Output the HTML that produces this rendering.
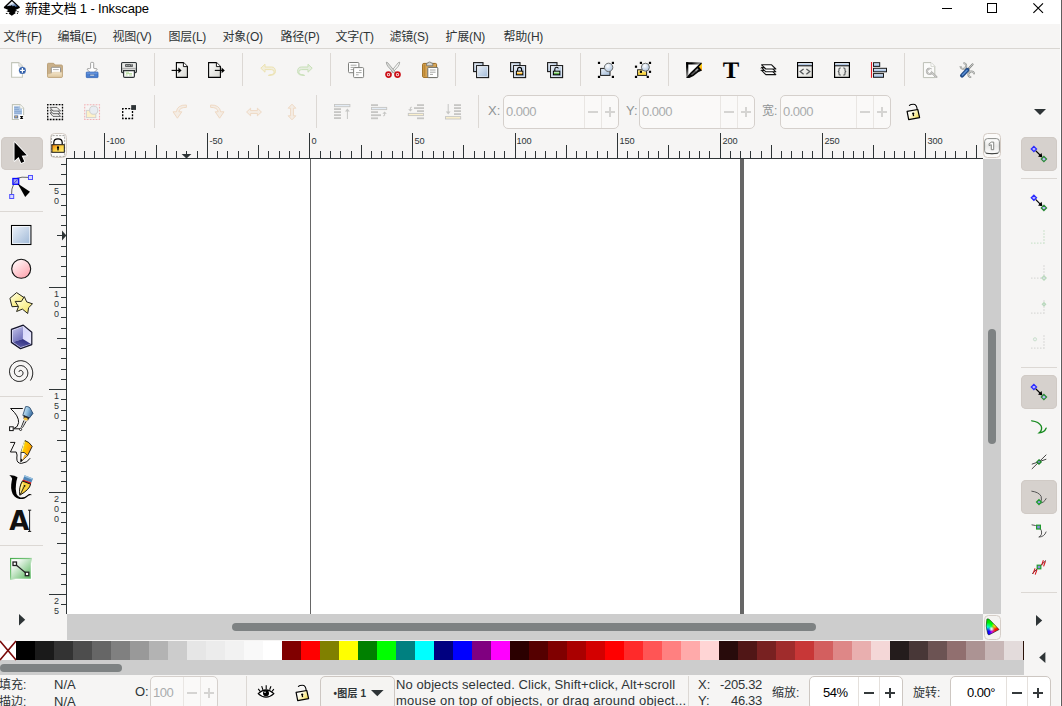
<!DOCTYPE html>
<html><head><meta charset="utf-8"><title>Inkscape</title>
<style>
html,body{margin:0;padding:0}
body{width:1062px;height:706px;overflow:hidden;position:relative;background:#f6f5f4;
font-family:"Liberation Sans","Noto Sans CJK SC",sans-serif;font-size:13px;color:#2e3436}
.a{position:absolute}
.t{position:absolute;white-space:nowrap;line-height:16px}
.sep{position:absolute;width:1px;background:#dcd8d4}
.hsep{position:absolute;height:1px;background:#dcd8d4}
.spin{position:absolute;box-sizing:border-box;border:1px solid #cdc7c2;border-radius:5px;background:#fff}
.spin.dis{background:#faf9f8;border-color:#d5d0cc}
.spin i{position:absolute;top:0;bottom:0;width:1px;background:#e4e0dc}
.spin.dis i{background:#e9e6e3}
.pm{position:absolute;background:#34393b}
.dis .pm{background:#d5d4d2}
.selbtn{position:absolute;background:#d6d1cd;border-radius:5px;box-shadow:inset 0 0 0 1px #d0cac5}
svg{position:absolute;overflow:visible}
</style></head><body>

<div class="a" style="left:0;top:0;width:1062px;height:24px;background:#fff"></div>
<div class="t" style="left:25px;top:0px;font-size:13px;line-height:17px;color:#000;letter-spacing:-0.15px">新建文档 1 - Inkscape</div>
<div class="a" style="left:942px;top:8px;width:10px;height:1px;background:#000"></div>
<div class="a" style="left:987px;top:3px;width:8px;height:8px;border:1px solid #000"></div>
<svg style="left:1033px;top:3px" width="11" height="11" viewBox="0 0 11 11"><path d="M0.4 0.3L10 9.9M10 0.3L0.4 9.9" stroke="#000" stroke-width="1.15" fill="none"/></svg>
<div class="t" style="left:3.5px;top:29px;font-size:12px;letter-spacing:-0.2px">文件(F)</div>
<div class="t" style="left:57.5px;top:29px;font-size:12px;letter-spacing:-0.2px">编辑(E)</div>
<div class="t" style="left:112.5px;top:29px;font-size:12px;letter-spacing:-0.2px">视图(V)</div>
<div class="t" style="left:168.5px;top:29px;font-size:12px;letter-spacing:-0.2px">图层(L)</div>
<div class="t" style="left:222.5px;top:29px;font-size:12px;letter-spacing:-0.2px">对象(O)</div>
<div class="t" style="left:280.5px;top:29px;font-size:12px;letter-spacing:-0.2px">路径(P)</div>
<div class="t" style="left:335.5px;top:29px;font-size:12px;letter-spacing:-0.2px">文字(T)</div>
<div class="t" style="left:389.5px;top:29px;font-size:12px;letter-spacing:-0.2px">滤镜(S)</div>
<div class="t" style="left:445.5px;top:29px;font-size:12px;letter-spacing:-0.2px">扩展(N)</div>
<div class="t" style="left:503.5px;top:29px;font-size:12px;letter-spacing:-0.2px">帮助(H)</div>
<div class="hsep" style="left:0;top:48px;width:1062px;background:#d9d6d2"></div>
<div class="sep" style="left:154px;top:53px;height:33px"></div>
<div class="sep" style="left:242px;top:53px;height:33px"></div>
<div class="sep" style="left:330px;top:53px;height:33px"></div>
<div class="sep" style="left:455px;top:53px;height:33px"></div>
<div class="sep" style="left:580px;top:53px;height:33px"></div>
<div class="sep" style="left:668px;top:53px;height:33px"></div>
<div class="sep" style="left:904px;top:53px;height:33px"></div>
<div class="sep" style="left:154px;top:95px;height:33px"></div>
<div class="sep" style="left:316px;top:95px;height:33px"></div>
<div class="sep" style="left:478px;top:95px;height:33px"></div>
<svg style="left:0;top:0" width="0" height="0"><defs>
<linearGradient id="gBlue" x1="0" y1="0" x2="1" y2="1"><stop offset="0" stop-color="#eef3fa"/><stop offset="1" stop-color="#9db7d6"/></linearGradient>
<linearGradient id="gPink" x1="0.2" y1="0.1" x2="0.8" y2="0.9"><stop offset="0" stop-color="#fff4f5"/><stop offset="1" stop-color="#ffa9b3"/></linearGradient>
<linearGradient id="gPage" x1="0" y1="0" x2="1" y2="1"><stop offset="0" stop-color="#ffffff"/><stop offset="1" stop-color="#d6d6d0"/></linearGradient>
<linearGradient id="gYel" x1="0.1" y1="0" x2="0.9" y2="1"><stop offset="0" stop-color="#fffef0"/><stop offset="0.5" stop-color="#fbf3a0"/><stop offset="1" stop-color="#f1e063"/></linearGradient>
<linearGradient id="gLock" x1="0" y1="0.2" x2="1" y2="0.8"><stop offset="0" stop-color="#ffffff"/><stop offset="0.3" stop-color="#fffdf0"/><stop offset="0.65" stop-color="#faee9c"/><stop offset="1" stop-color="#f0d640"/></linearGradient>
<linearGradient id="gLockO" x1="0" y1="0" x2="1" y2="1"><stop offset="0" stop-color="#f07c00"/><stop offset="0.5" stop-color="#fdd247"/><stop offset="1" stop-color="#fff176"/></linearGradient>
<linearGradient id="gGreenS" x1="0" y1="0" x2="1" y2="1"><stop offset="0" stop-color="#46ab4c"/><stop offset="0.45" stop-color="#7cc680"/><stop offset="0.62" stop-color="#ffffff"/><stop offset="1" stop-color="#ffffff"/></linearGradient>
<linearGradient id="gGreenF" x1="0" y1="0" x2="1" y2="1"><stop offset="0" stop-color="#ffffff"/><stop offset="0.18" stop-color="#fbfdfb"/><stop offset="1" stop-color="#56b45c"/></linearGradient>
<linearGradient id="gBoxL" x1="0.2" y1="0" x2="0.7" y2="1"><stop offset="0" stop-color="#c6c6ea"/><stop offset="1" stop-color="#6c6cba"/></linearGradient>
<linearGradient id="gBoxR" x1="0" y1="0" x2="1" y2="1"><stop offset="0" stop-color="#d4d4fa"/><stop offset="1" stop-color="#ececff"/></linearGradient>
<linearGradient id="gBoxB" x1="0.8" y1="0" x2="0.2" y2="1"><stop offset="0" stop-color="#26267c"/><stop offset="1" stop-color="#6a6ab0"/></linearGradient>
<linearGradient id="gCap" x1="0" y1="0.3" x2="1" y2="0.7"><stop offset="0" stop-color="#d8eef8"/><stop offset="0.45" stop-color="#8dbbdc"/><stop offset="1" stop-color="#2c5c92"/></linearGradient>
<linearGradient id="gPencil" x1="0" y1="0" x2="1" y2="0.4"><stop offset="0" stop-color="#fff200"/><stop offset="1" stop-color="#ff9a00"/></linearGradient>
<linearGradient id="gSnow" x1="0.25" y1="0" x2="0.95" y2="0.9"><stop offset="0" stop-color="#ffffff"/><stop offset="0.35" stop-color="#e4ebf5"/><stop offset="0.7" stop-color="#6f8fbe"/><stop offset="1" stop-color="#1f3f78"/></linearGradient>
<linearGradient id="gKey" x1="0" y1="0" x2="0" y2="1"><stop offset="0" stop-color="#ffffff"/><stop offset="0.5" stop-color="#e9e9e8"/><stop offset="1" stop-color="#fdfdfd"/></linearGradient>
<linearGradient id="gFold" x1="0" y1="0" x2="0" y2="1"><stop offset="0" stop-color="#f3e4c8"/><stop offset="1" stop-color="#dfc9a2"/></linearGradient>
<linearGradient id="gWin" x1="0" y1="0" x2="1" y2="1"><stop offset="0" stop-color="#ffffff"/><stop offset="1" stop-color="#dcdcd6"/></linearGradient>
<linearGradient id="gTitle" x1="0" y1="0" x2="0" y2="1"><stop offset="0" stop-color="#e8f0fa"/><stop offset="1" stop-color="#8fb0da"/></linearGradient>
<radialGradient id="gBall" cx="0.4" cy="0.35" r="0.7"><stop offset="0" stop-color="#ffffff"/><stop offset="1" stop-color="#a9c0dc"/></radialGradient>
</defs></svg>
<svg style="left:0px;top:0px" width="24" height="17" viewBox="0 0 24 17" ><path d="M11.8 -0.6L19.9 7.1Q20 8 18.6 8.6L15.4 9.9L17.2 10.8L14.6 12L15.8 13L11.8 15.7L8.6 13.6L9.8 12.6L6.4 11.3L8.4 9.9L5 8.6Q3.6 8 3.9 7.1Z" fill="#000"/><path d="M11.9 1.3L18.2 7Q16.6 5.9 15.3 7Q14.4 4.8 12.8 6.4Q11.6 4.4 10.3 6.1Q9 5.2 7.6 6.3Q7 6.2 7.2 5.8Z" fill="url(#gSnow)"/><ellipse cx="17.9" cy="11.7" rx="1.1" ry="0.5" fill="#000"/><ellipse cx="6.7" cy="13.4" rx="1" ry="0.5" fill="#000"/><ellipse cx="17.4" cy="13.4" rx="0.6" ry="0.5" fill="#000"/></svg>
<svg style="left:11px;top:62px" width="16" height="16" viewBox="0 0 16 16" ><path d="M0.6 0.6H7.8L11.4 4.2V15.3H0.6Z" fill="#fff" stroke="#c3c6ba" stroke-width="1.1" stroke-linejoin="round"/><path d="M7.8 0.8V4.2H11.2" fill="#eee" stroke="#c9cbc2" stroke-width="0.8"/><circle cx="11.4" cy="8.4" r="3.6" fill="#2a59a6"/><circle cx="11.4" cy="8.4" r="3.6" fill="none" stroke="#fff" stroke-width="0.6" opacity="0.5"/><path d="M9.1 8.4H13.7M11.4 6.1V10.7" stroke="#fff" stroke-width="1.3"/></svg>
<svg style="left:47px;top:62px" width="16" height="16" viewBox="0 0 16 16" ><path d="M0.5 2.2Q0.5 1.3 1.4 1.3H6.2Q7 1.3 7.4 2.1L7.9 3H14.4Q15.4 3 15.4 4V14.4Q15.4 15.4 14.4 15.4H1.5Q0.5 15.4 0.5 14.4Z" fill="#c9b08a" stroke="#b89c72" stroke-width="0.9"/><rect x="4.3" y="5.3" width="9.2" height="6.5" rx="0.8" fill="#fff" stroke="#8a8a88" stroke-width="0.9"/><path d="M6 7.6H11.8" stroke="#a8a8a6" stroke-width="0.9"/><path d="M0.9 12.2Q3 12.2 4.4 11.2Q5.6 10.2 7 10.2H15V14.3Q15 15 14.3 15H1.6Q0.9 15 0.9 14.3Z" fill="url(#gFold)" stroke="#d6bf96" stroke-width="0.5"/></svg>
<svg style="left:84px;top:62px" width="16" height="16" viewBox="0 0 16 16" ><path d="M6.6 1.2Q6.6 0.4 7.4 0.4H8.9Q9.7 0.4 9.7 1.2V6.2Q10.6 6.8 12.6 6.6Q13.6 6.8 12.9 7.9L8.7 11.6Q8.1 12 7.6 11.6L3.4 7.9Q2.7 6.8 3.7 6.6Q5.7 6.8 6.6 6.2Z" fill="#fff" stroke="#9a9a98" stroke-width="0.9"/><rect x="2.3" y="10.1" width="11.7" height="5.5" rx="0.5" fill="#4a7fd0" stroke="#2f62b4" stroke-width="0.8"/><path d="M2.8 10.6H13.5V11.5H2.8Z" fill="#7aa5e6"/><rect x="5.9" y="12.4" width="4.5" height="1.5" fill="#fff" stroke="#355c9c" stroke-width="0.5"/></svg>
<svg style="left:121px;top:62px" width="16" height="16" viewBox="0 0 16 16" ><path d="M0.6 1.6Q0.6 0.6 1.6 0.6H14.4Q15.4 0.6 15.4 1.6V9.6Q15.4 10.6 14.4 10.6H1.6Q0.6 10.6 0.6 9.6Z" fill="#d9dad8" stroke="#2e3436" stroke-width="1.2"/><rect x="1.4" y="1.2" width="13.2" height="4.6" fill="#e8e9e7"/><rect x="4.2" y="2.2" width="7.6" height="2.6" fill="#3b3f40"/><rect x="5.2" y="3" width="1.4" height="0.9" fill="#cfd2d0"/><rect x="7.4" y="3" width="1.4" height="0.9" fill="#cfd2d0"/><rect x="9.6" y="2.6" width="1.6" height="0.8" fill="#eee"/><path d="M1.2 6.4H14.8" stroke="#9a9c9a" stroke-width="0.8"/><path d="M2.6 8.6H13.4V14.2Q13.4 15.4 12.2 15.4H3.8Q2.6 15.4 2.6 14.2Z" fill="#fff" stroke="#2e3436" stroke-width="1.2"/><path d="M4.6 10.2H8M5 11.6H11M4.6 13H6.6M8 13H11" stroke="#a5d38a" stroke-width="0.8"/></svg>
<svg style="left:171px;top:62px" width="18" height="16" viewBox="0 0 18 16" ><path d="M5.4 0.6H12.399999999999999L16.4 4.6V15.4H5.4Z" fill="url(#gPage)" stroke="#000" stroke-width="1.1" stroke-linejoin="miter"/><path d="M12.399999999999999 0.6V4.6H16.4" fill="#fff" stroke="#000" stroke-width="0.9"/><path d="M0.6 8.4H8" stroke="#000" stroke-width="1.1"/><path d="M7.4 5.6L10.6 8.4L7.4 11.2Z" fill="#000"/></svg>
<svg style="left:208px;top:62px" width="18" height="16" viewBox="0 0 18 16" ><path d="M0.6 0.6H8.4L12.4 4.6V15.4H0.6Z" fill="url(#gPage)" stroke="#000" stroke-width="1.1" stroke-linejoin="miter"/><path d="M8.4 0.6V4.6H12.4" fill="#fff" stroke="#000" stroke-width="0.9"/><path d="M6.8 8.4H14" stroke="#000" stroke-width="1.1"/><path d="M13.6 5.6L16.8 8.4L13.6 11.2Z" fill="#000"/></svg>
<svg style="left:259.5px;top:62px" width="16" height="16" viewBox="0 0 16 16" ><g  opacity="0.75"><path d="M5 2.2L0.8 6.2L5 10.2V7.6H11.4Q14.2 7.6 14.2 10Q14.2 12.6 10 12.8L8.4 13.4Q15.4 13.6 15.4 9.6Q15.4 5 11.6 5H5Z" fill="#e9dc9a" fill-opacity="0.35" stroke="#e9dc9a" stroke-width="1" stroke-linejoin="round"/></g></svg>
<svg style="left:297px;top:62px" width="16" height="16" viewBox="0 0 16 16" ><g transform="translate(16,0) scale(-1,1)" opacity="0.75"><path d="M5 2.2L0.8 6.2L5 10.2V7.6H11.4Q14.2 7.6 14.2 10Q14.2 12.6 10 12.8L8.4 13.4Q15.4 13.6 15.4 9.6Q15.4 5 11.6 5H5Z" fill="#b9d9a4" fill-opacity="0.35" stroke="#b9d9a4" stroke-width="1" stroke-linejoin="round"/></g></svg>
<svg style="left:348px;top:62px" width="16" height="16" viewBox="0 0 16 16" ><rect x="0.5" y="0.5" width="10.4" height="10.2" rx="1" fill="#fff" stroke="#7e7f7c" stroke-width="1"/><path d="M2.6 3.2H8.6M2.6 5.4H8.6M2.6 7.6H5.4" stroke="#9c9d9a" stroke-width="0.9"/><rect x="5.6" y="5.6" width="10" height="10" rx="1" fill="#fff" stroke="#7e7f7c" stroke-width="1"/><path d="M11 8.4H13.6M8 10.6H13.6M8 12.8H10.6" stroke="#9c9d9a" stroke-width="0.9"/></svg>
<svg style="left:385px;top:62px" width="16" height="16" viewBox="0 0 16 16" ><path d="M14.7 0.2L13.4 0.6L5.4 10.4L6.8 11.4L13 4.6Q14.6 2.4 14.7 0.2Z" fill="#f4f5f3" stroke="#8b8d8a" stroke-width="0.7"/><path d="M1.3 0.2L2.6 0.6L10.6 10.4L9.2 11.4L3 4.6Q1.4 2.4 1.3 0.2Z" fill="#dcdedb" stroke="#8b8d8a" stroke-width="0.7"/><circle cx="3.5" cy="12.6" r="2.5" fill="#fff" stroke="#cc0f17" stroke-width="1.7"/><circle cx="3.5" cy="12.6" r="0.85" fill="#cc0f17"/><circle cx="12.5" cy="12.6" r="2.5" fill="#fff" stroke="#cc0f17" stroke-width="1.7"/><circle cx="12.5" cy="12.6" r="0.85" fill="#cc0f17"/></svg>
<svg style="left:422px;top:62px" width="16" height="16" viewBox="0 0 16 16" ><rect x="0.6" y="1.4" width="14" height="14" rx="1.2" fill="#d8a75a" stroke="#9a6a1e" stroke-width="1"/><path d="M1.6 2.4H3.4V14.4H1.6Z" fill="#bd8732"/><path d="M4.6 1.8Q4.6 1 5.6 1H6.2Q6.2 0 7.6 0Q9 0 9 1H9.8Q10.8 1 10.8 1.8V3.8H4.6Z" fill="#d5d6d3" stroke="#6c6e6b" stroke-width="0.8"/><rect x="5.8" y="5.4" width="10" height="10.2" rx="0.8" fill="#fff" stroke="#6c6e6b" stroke-width="1"/><path d="M8 8H13.6M8 10.2H13.6M8 12.4H11" stroke="#9c9d9a" stroke-width="0.9"/></svg>
<svg style="left:473px;top:62px" width="16" height="16" viewBox="0 0 16 16" ><rect x="0.6" y="0.6" width="9.4" height="9" fill="url(#gBlue)" stroke="#1a1a1a" stroke-width="1.1"/><rect x="3.6" y="3.6" width="12" height="12" fill="url(#gBlue)" stroke="#1a1a1a" stroke-width="1.1"/><rect x="4.6" y="4.6" width="10" height="10" fill="none" stroke="#fff" stroke-width="0.7" opacity="0.7"/></svg>
<svg style="left:510px;top:62px" width="16" height="16" viewBox="0 0 16 16" ><rect x="0.6" y="0.6" width="9.4" height="9" fill="url(#gBlue)" stroke="#1a1a1a" stroke-width="1.1"/><rect x="3.6" y="3.6" width="12" height="12" fill="url(#gBlue)" stroke="#1a1a1a" stroke-width="1.1"/><rect x="4.6" y="4.6" width="10" height="10" fill="none" stroke="#fff" stroke-width="0.7" opacity="0.7"/><path d="M7.6 9.4V7.4Q7.6 5.4 9.6 5.4Q11.6 5.4 11.6 7.4V9.4" fill="none" stroke="#000" stroke-width="1.1"/><rect x="6.4" y="9.2" width="6.4" height="3.6" fill="#fbb92e" stroke="#000" stroke-width="1"/><path d="M6.9 9.8H12.3V10.8H6.9Z" fill="#fff" opacity="0.75"/></svg>
<svg style="left:547px;top:62px" width="16" height="16" viewBox="0 0 16 16" ><rect x="0.6" y="0.6" width="9.4" height="9" fill="url(#gBlue)" stroke="#1a1a1a" stroke-width="1.1"/><rect x="3.6" y="3.6" width="12" height="12" fill="url(#gBlue)" stroke="#1a1a1a" stroke-width="1.1"/><rect x="4.6" y="4.6" width="10" height="10" fill="none" stroke="#fff" stroke-width="0.7" opacity="0.7"/><path d="M7.8 9.4V7.2Q7.8 5.2 9.6 5.2Q11 5.2 11.4 6.4" fill="none" stroke="#000" stroke-width="1.1"/><rect x="6.4" y="9.2" width="6.4" height="3.6" fill="#5fb84a" stroke="#000" stroke-width="1"/><path d="M6.9 9.8H12.3V10.8H6.9Z" fill="#fff" opacity="0.75"/></svg>
<svg style="left:598px;top:62px" width="16" height="16" viewBox="0 0 16 16" ><rect x="-0.1" y="-0.2" width="2.2" height="2.2" fill="#000"/><rect x="13.8" y="-0.2" width="2.2" height="2.2" fill="#000"/><rect x="-0.1" y="13.8" width="2.2" height="2.2" fill="#000"/><rect x="13.8" y="13.8" width="2.2" height="2.2" fill="#000"/><rect x="2.6" y="6.4" width="9.4" height="7" fill="url(#gBlue)" stroke="#1a1a1a" stroke-width="1"/><circle cx="10.6" cy="5.4" r="4.2" fill="url(#gBall)" stroke="#6a6c6a" stroke-width="1"/></svg>
<svg style="left:635px;top:62px" width="16" height="16" viewBox="0 0 16 16" ><rect x="2.6" y="7.8" width="9" height="5.6" fill="#fbd748" stroke="#1a1a1a" stroke-width="1"/><rect x="3.4" y="8.6" width="7.4" height="1.6" fill="#fff2a8"/><circle cx="10.4" cy="5.2" r="4" fill="url(#gBall)" stroke="#6a6c6a" stroke-width="1"/><rect x="4.8" y="-0.2" width="2.2" height="2.2" fill="#000"/><rect x="13.9" y="-0.2" width="2.2" height="2.2" fill="#000"/><rect x="4.8" y="8.7" width="2.2" height="2.2" fill="#000"/><rect x="13.9" y="8.7" width="2.2" height="2.2" fill="#000"/><rect x="-0.1" y="3.6" width="2.2" height="2.2" fill="#000"/><rect x="-0.1" y="13.8" width="2.2" height="2.2" fill="#000"/><rect x="11.7" y="13.8" width="2.2" height="2.2" fill="#000"/></svg>
<svg style="left:686px;top:62px" width="16" height="16" viewBox="0 0 16 16" ><defs><linearGradient id="gFR" x1="0" y1="0" x2="1" y2="0"><stop offset="0" stop-color="#000"/><stop offset="0.35" stop-color="#000"/><stop offset="1" stop-color="#000" stop-opacity="0.25"/></linearGradient><linearGradient id="gFD" x1="0" y1="0" x2="0" y2="1"><stop offset="0" stop-color="#000"/><stop offset="0.3" stop-color="#000"/><stop offset="1" stop-color="#000" stop-opacity="0.3"/></linearGradient><linearGradient id="gOr" x1="0" y1="0" x2="0" y2="1"><stop offset="0" stop-color="#ffe626"/><stop offset="1" stop-color="#ff9a00"/></linearGradient></defs><path d="M1.6 1.6H14L1.6 14.6Z" fill="#fff"/><path d="M0.1 0.3H16V1.6L14.4 2.6H0.1Z" fill="url(#gFR)"/><path d="M0.1 0.3H2.3V13.6L0.1 15.8Z" fill="url(#gFD)"/><path d="M0.1 15.9Q1.8 13.4 4.6 10.4L10.6 4.8L14.4 0.9L16 1.2V8.4L12.2 10.2Q8 14.2 3.4 15.9Z" fill="#070707"/><path d="M4.6 12.6L9.6 8.2L10.8 9.2L6.2 13Z" fill="#5a5a5a"/><path d="M9 8.6L11.4 6.2L12.6 7.4L10.2 9.6Z" fill="#9a9a9a"/><path d="M12.9 4.7L16 1.5V8.4Z" fill="url(#gOr)"/></svg>
<svg style="left:723px;top:62px" width="16" height="16" viewBox="0 0 16 16" ><text transform="translate(8.1,15.7) scale(1.04,1)" x="0" y="0" text-anchor="middle" font-family="Liberation Serif,serif" font-weight="bold" font-size="23.8" text-rendering="geometricPrecision" fill="#000">T</text></svg>
<svg style="left:760px;top:62px" width="16" height="16" viewBox="0 0 16 16" ><path d="M1.6 8.4H11.6L15.8 12.600000000000001H5.8Z" fill="#fff" stroke="#111" stroke-width="1.1" stroke-linejoin="round"/><path d="M1.6 5.6H11.6L15.8 9.8H5.8Z" fill="#fff" stroke="#111" stroke-width="1.1" stroke-linejoin="round"/><path d="M1.6 2.8H11.6L15.8 7.0H5.8Z" fill="#fff" stroke="#111" stroke-width="1.1" stroke-linejoin="round"/><path d="M0.6 6.2L1.8 5M0.6 9L1.8 7.8" stroke="#1a1a1a" stroke-width="0.8"/></svg>
<svg style="left:797px;top:62px" width="16" height="16" viewBox="0 0 16 16" ><rect x="0.6" y="0.6" width="14.8" height="14.8" fill="url(#gWin)" stroke="#000" stroke-width="1.2"/><rect x="1.4" y="1.4" width="13.2" height="1.9" fill="url(#gTitle)"/><path d="M0.6 3.8H15.4" stroke="#000" stroke-width="1"/><path d="M6.6 7L3.2 9.6L6.6 12.2M9.4 7L12.8 9.6L9.4 12.2" fill="none" stroke="#55585a" stroke-width="1.3"/></svg>
<svg style="left:834px;top:62px" width="16" height="16" viewBox="0 0 16 16" ><rect x="0.6" y="0.6" width="14.8" height="14.8" fill="url(#gWin)" stroke="#000" stroke-width="1.2"/><rect x="1.4" y="1.4" width="13.2" height="1.9" fill="url(#gTitle)"/><path d="M0.6 3.8H15.4" stroke="#000" stroke-width="1"/><path d="M6.8 6H6Q5 6 5 7V8.6Q5 9.5 3.8 9.5Q5 9.5 5 10.4V12Q5 13 6 13H6.8" fill="none" stroke="#55585a" stroke-width="1.1"/><path d="M9.2 6H10Q11 6 11 7V8.6Q11 9.5 12.2 9.5Q11 9.5 11 10.4V12Q11 13 10 13H9.2" fill="none" stroke="#55585a" stroke-width="1.1"/></svg>
<svg style="left:871px;top:62px" width="16" height="16" viewBox="0 0 16 16" ><path d="M0.5 0V15.8" stroke="#e01b24" stroke-width="1.1"/><rect x="2.5" y="0.7" width="6.2" height="3.7" fill="url(#gTitle)" stroke="#1a1a1a" stroke-width="1"/><rect x="2.5" y="6.3" width="13" height="3.5" fill="url(#gTitle)" stroke="#1a1a1a" stroke-width="1"/><rect x="2.5" y="11.6" width="10" height="3.7" fill="url(#gTitle)" stroke="#1a1a1a" stroke-width="1"/></svg>
<svg style="left:922px;top:62px" width="16" height="16" viewBox="0 0 16 16" ><path d="M1.4 0.6H9L12.8 4.4V15.6H1.4Z" fill="#fbfbfa" stroke="#bcbfb6" stroke-width="1"/><path d="M9 0.8V4.4H12.6" fill="#fff" stroke="#c8cac2" stroke-width="0.7"/><path d="M8.9 7.2A2.6 2.6 0 1 0 9.8 10.6L14.4 15" fill="none" stroke="#a3a3a0" stroke-width="2.1" stroke-linecap="round"/><path d="M8.9 7.2A2.6 2.6 0 1 0 9.8 10.6L14.4 15" fill="none" stroke="#f4f4f2" stroke-width="0.7" stroke-linecap="round"/><path d="M7.6 8.6L9.6 7" stroke="#fbfbfa" stroke-width="1.3"/></svg>
<svg style="left:959px;top:62px" width="16" height="16" viewBox="0 0 16 16" ><path d="M5.4 5.2L11.4 11.2" stroke="#8a8c89" stroke-width="2.6" stroke-linecap="butt"/><path d="M5 4.8L11.8 11.6" stroke="#e9eae8" stroke-width="1.1" stroke-linecap="round"/><path d="M4.4 1.1A2.9 2.9 0 1 1 1.5 4" fill="none" stroke="#8a8c89" stroke-width="1.8"/><path d="M4.4 1.1A2.9 2.9 0 1 1 1.5 4" fill="none" stroke="#eeefed" stroke-width="0.6"/><path d="M12.2 15.1A2.9 2.9 0 1 1 15.1 12.2" fill="none" stroke="#8a8c89" stroke-width="1.8"/><path d="M12.2 15.1A2.9 2.9 0 1 1 15.1 12.2" fill="none" stroke="#eeefed" stroke-width="0.6"/><path d="M13.6 2.4L8.4 8" stroke="#7c7e7b" stroke-width="2" stroke-linecap="round"/><path d="M13.6 2.4L8.4 8" stroke="#dfe0de" stroke-width="0.8" stroke-linecap="round"/><path d="M8.4 7.8L3 13.6" stroke="#204a87" stroke-width="4" stroke-linecap="round"/><path d="M8 8.2L3.4 13" stroke="#5a8fd6" stroke-width="1.5" stroke-linecap="round"/></svg>
<svg style="left:11px;top:104px" width="16" height="16" viewBox="0 0 16 16" ><path d="M1.4 0.6H9L12.6 4.2V15.5H1.4Z" fill="#fff" stroke="#c3c6ba" stroke-width="1.1"/><path d="M9 0.8V4.2H12.4" fill="#fff" stroke="#c9cbc2" stroke-width="0.7"/><path d="M3 2.2H9V4.6H11V10.6H3Z" fill="#aac4e4"/><path d="M3.4 3.4H7.4M3.4 5.4H8M3.4 7.4H10.6M3.4 9.2H10.6" stroke="#7f9fcb" stroke-width="0.8"/><rect x="3.2" y="11.4" width="4" height="3" fill="#54709c"/><rect x="4" y="12.3" width="2.2" height="1.1" fill="#e8b86a"/><rect x="8" y="11.2" width="5.6" height="5" fill="#fff"/><path d="M8.8 12H12.4L11.2 13.45L12.4 14.9H8.8L10 13.45Z" fill="#000"/></svg>
<svg style="left:47px;top:104px" width="16" height="16" viewBox="0 0 16 16" ><path d="M3 8.8H10L13.6 12.4H6Z" fill="url(#gKey)" stroke="#555" stroke-width="0.9" stroke-linejoin="round"/><path d="M3 6.1H10L13.6 9.7H6Z" fill="url(#gKey)" stroke="#555" stroke-width="0.9" stroke-linejoin="round"/><path d="M3 3.4H10L13.6 7H6Z" fill="url(#gKey)" stroke="#555" stroke-width="0.9" stroke-linejoin="round"/><rect x="0.7" y="0.7" width="14.8" height="14.8" fill="none" stroke="#000" stroke-width="1.3" stroke-dasharray="1.8 1.16" stroke-dashoffset="0.9"/></svg>
<svg style="left:84px;top:104px" width="16" height="16" viewBox="0 0 16 16" ><rect x="0.7" y="0.7" width="14.8" height="14.8" fill="none" stroke="#f2b1b4" stroke-width="1.1" stroke-dasharray="1.8 1.16" stroke-dashoffset="0.9"/><rect x="2.4" y="6.4" width="9.4" height="7.2" fill="#fdf1c8" stroke="#d3d3d1" stroke-width="1"/><circle cx="9.7" cy="6.2" r="4.1" fill="#e9edf2" stroke="#d0d1cf" stroke-width="1"/></svg>
<svg style="left:121px;top:104px" width="16" height="16" viewBox="0 0 16 16" ><rect x="1.7" y="4.7" width="9.8" height="9.8" fill="#f9f9f8" stroke="#000" stroke-width="1.3" stroke-dasharray="2 1.267" stroke-dashoffset="1"/><rect x="10.2" y="1.1" width="4.8" height="4.8" fill="#2e3436"/></svg>
<svg style="left:172px;top:104px" width="16" height="16" viewBox="0 0 16 16" ><g ><path d="M14.4 1Q5.2 0.8 4.4 7.8H1L5.4 14.2L9.8 7.8H6.8Q7.6 3.2 14.4 3.4Z" fill="#efd9c4" fill-opacity="0.3" stroke="#efd9c4" stroke-width="1" stroke-linejoin="round"/></g></svg>
<svg style="left:209px;top:104px" width="16" height="16" viewBox="0 0 16 16" ><g transform="translate(16,0) scale(-1,1)"><path d="M14.4 1Q5.2 0.8 4.4 7.8H1L5.4 14.2L9.8 7.8H6.8Q7.6 3.2 14.4 3.4Z" fill="#efd9c4" fill-opacity="0.3" stroke="#efd9c4" stroke-width="1" stroke-linejoin="round"/></g></svg>
<svg style="left:246px;top:104px" width="16" height="16" viewBox="0 0 16 16" ><path d="M0.6 8L4.6 4.2V6.6H11.4V4.2L15.4 8L11.4 11.8V9.4H4.6V11.8Z" fill="#efd9c4" fill-opacity="0.3" stroke="#efd9c4" stroke-width="1" stroke-linejoin="round"/></svg>
<svg style="left:283.5px;top:104px" width="16" height="16" viewBox="0 0 16 16" ><path d="M8 0.2L11.8 4.2H9.4V11.8H11.8L8 15.8L4.2 11.8H6.6V4.2H4.2Z" fill="#efd9c4" fill-opacity="0.3" stroke="#efd9c4" stroke-width="1" stroke-linejoin="round"/></svg>
<svg style="left:334px;top:104px" width="16" height="16" viewBox="0 0 16 16" ><rect x="0.5" y="0.5" width="15.4" height="2.2" fill="#e3ebf4" stroke="#c6c6c4" stroke-width="0.9"/><rect x="0" y="4.2" width="7" height="1.8" fill="#c6c6c4"/><rect x="0" y="7.2" width="7" height="1.8" fill="#c6c6c4"/><rect x="0" y="10.2" width="7" height="1.8" fill="#c6c6c4"/><rect x="0" y="13.2" width="7" height="1.8" fill="#c6c6c4"/><path d="M13.4 15V5.4" stroke="#c6c6c4" stroke-width="1"/><path d="M11 7.6L13.4 4.6L15.8 7.6Z" fill="#c6c6c4"/></svg>
<svg style="left:371px;top:104px" width="16" height="16" viewBox="0 0 16 16" ><rect x="0" y="0.2" width="7" height="1.8" fill="#c6c6c4"/><rect x="0" y="7.2" width="7" height="1.8" fill="#c6c6c4"/><rect x="0" y="13.4" width="7" height="1.8" fill="#c6c6c4"/><rect x="0" y="10.3" width="10" height="1.8" fill="#c6c6c4"/><rect x="0.5" y="3.4" width="15.2" height="2.2" fill="#e3ebf4" stroke="#c6c6c4" stroke-width="0.9"/><path d="M13.6 11.6V9" stroke="#c6c6c4" stroke-width="1"/><path d="M11.4 9.8L13.6 7.4L15.8 9.8Z" fill="#c6c6c4"/><path d="M13.6 11.6Q13 12 12 11.6" stroke="#c6c6c4" stroke-width="0.9" fill="none"/></svg>
<svg style="left:408px;top:104px" width="16" height="16" viewBox="0 0 16 16" ><rect x="9" y="0.2" width="7" height="1.8" fill="#c6c6c4"/><rect x="9" y="6.2" width="7" height="1.8" fill="#c6c6c4"/><rect x="9" y="13.4" width="7" height="1.8" fill="#c6c6c4"/><rect x="6" y="3.2" width="10" height="1.8" fill="#c6c6c4"/><rect x="0.3" y="9.4" width="15.2" height="2.2" fill="#fbf0cc" stroke="#c6c6c4" stroke-width="0.9"/><path d="M2.4 3.4V6" stroke="#c6c6c4" stroke-width="1"/><path d="M0.2 5.2L2.4 7.6L4.6 5.2Z" fill="#c6c6c4"/><path d="M2.4 3.4Q3 3 4 3.4" stroke="#c6c6c4" stroke-width="0.9" fill="none"/></svg>
<svg style="left:445px;top:104px" width="16" height="16" viewBox="0 0 16 16" ><rect x="9" y="0.2" width="7" height="1.8" fill="#c6c6c4"/><rect x="9" y="3.2" width="7" height="1.8" fill="#c6c6c4"/><rect x="9" y="6.2" width="7" height="1.8" fill="#c6c6c4"/><rect x="9" y="9.2" width="7" height="1.8" fill="#c6c6c4"/><rect x="0.5" y="12.6" width="15.2" height="2.4" fill="#fbf0cc" stroke="#c6c6c4" stroke-width="0.9"/><path d="M3.2 0V9" stroke="#c6c6c4" stroke-width="1"/><path d="M0.8 7.4L3.2 10.6L5.6 7.4Z" fill="#c6c6c4"/></svg>
<svg style="left:905px;top:103px" width="18" height="18" viewBox="0 0 18 18" ><path d="M12.2 6.6Q11.8 1.2 8.4 1.2Q5.6 1.2 4.4 2.4" fill="none" stroke="#fff" stroke-width="2.6" opacity="0.9"/><path d="M12.2 6.6Q11.8 1.2 8.4 1.2Q5.6 1.2 4.4 2.4" fill="none" stroke="#000" stroke-width="1.1" stroke-linecap="round"/><path d="M2.1 8.3L12.8 6.5L14.6 14.6L3.7 16.6Z" fill="url(#gLock)" stroke="#000" stroke-width="1.2" stroke-linejoin="round"/><circle cx="8.2" cy="10.6" r="1.1" fill="#000"/><path d="M7.8 10.8L7.9 13.2L9.2 13L8.7 10.7Z" fill="#000"/></svg>
<div class="t" style="left:488px;top:103px;color:#8f9394">X:</div>
<div class="spin dis" style="left:503px;top:95px;width:116px;height:34px"><i style="left:80px"></i><i style="left:97px"></i><span class="t" style="left:2px;top:8px;font-size:13px;color:#a9acad;letter-spacing:-0.5px">0.000</span><b class="pm" style="left:84.0px;top:15.0px;width:10px;height:2px"></b><b class="pm" style="left:101.0px;top:15.0px;width:10px;height:2px"></b><b class="pm" style="left:105.0px;top:11.0px;width:2px;height:10px"></b></div>
<div class="t" style="left:626px;top:103px;color:#8f9394">Y:</div>
<div class="spin dis" style="left:639px;top:95px;width:116px;height:34px"><i style="left:80px"></i><i style="left:97px"></i><span class="t" style="left:2px;top:8px;font-size:13px;color:#a9acad;letter-spacing:-0.5px">0.000</span><b class="pm" style="left:84.0px;top:15.0px;width:10px;height:2px"></b><b class="pm" style="left:101.0px;top:15.0px;width:10px;height:2px"></b><b class="pm" style="left:105.0px;top:11.0px;width:2px;height:10px"></b></div>
<div class="t" style="left:762px;top:103px;font-size:12px;color:#8f9394">宽:</div>
<div class="spin dis" style="left:780px;top:95px;width:111px;height:34px"><i style="left:75px"></i><i style="left:92px"></i><span class="t" style="left:2px;top:8px;font-size:13px;color:#a9acad;letter-spacing:-0.5px">0.000</span><b class="pm" style="left:79.0px;top:15.0px;width:10px;height:2px"></b><b class="pm" style="left:96.0px;top:15.0px;width:10px;height:2px"></b><b class="pm" style="left:100.0px;top:11.0px;width:2px;height:10px"></b></div>
<svg style="left:1034px;top:109px" width="12" height="6" viewBox="0 0 12 6"><path d="M0 0H12L6 6Z" fill="#2e3436"/></svg>
<div class="selbtn" style="left:0.5px;top:137px;width:42px;height:32.5px"></div>
<div class="hsep" style="left:0;top:211px;width:43px"></div>
<div class="hsep" style="left:0;top:396px;width:43px"></div>
<div class="hsep" style="left:0;top:545px;width:43px"></div>
<svg style="left:19px;top:614.3px" width="7" height="12" viewBox="0 0 7 12"><path d="M0 0V11.4L6.2 5.7Z" fill="#2e3436"/></svg>
<svg style="left:0;top:0" width="46" height="640" viewBox="0 0 46 640"><path d="M14.5 142.3V160.8L18.6 157L21.2 162.9L24.3 161.5L21.7 155.8L26.8 155.3Z" fill="#000" stroke="#fff" stroke-width="1.8" stroke-linejoin="round" paint-order="stroke"/><path d="M15.8 178.6Q22 176.4 28.4 177.4" fill="none" stroke="#555" stroke-width="0.9"/><path d="M13.6 184.4Q11.2 189 11.6 194.2" fill="none" stroke="#555" stroke-width="0.9"/><rect x="12.9" y="178.5" width="5.8" height="5.8" fill="#a0a0f4" stroke="#0a0aff" stroke-width="1.3"/><path d="M13.8 183.4L17.8 179.4" stroke="#3030c0" stroke-width="0.9" opacity="0.8"/><rect x="28.5" y="175.5" width="4" height="4" fill="#d8d8ff" stroke="#5050ff" stroke-width="1"/><rect x="9.7" y="194.5" width="4" height="4" fill="#d8d8ff" stroke="#5050ff" stroke-width="1"/><path d="M17.6 183.6L30 191.8L25.2 197Z" fill="#000"/><rect x="11.5" y="225.5" width="19.4" height="19" fill="url(#gBlue)" stroke="#000" stroke-width="1.1"/><rect x="12.6" y="226.6" width="17.2" height="16.8" fill="none" stroke="#fff" stroke-width="0.9" opacity="0.85"/><circle cx="21.2" cy="268.8" r="9.5" fill="url(#gPink)" stroke="#111" stroke-width="1.1"/><path d="M16.6 292.6L23.8 297.4L21.4 306.2L12 306.7L9.9 298.3Z" fill="url(#gYel)" stroke="#26261c" stroke-width="1" stroke-linejoin="round"/><path d="M24.3 296.6L26.7 301.9L32.5 303.8L28.6 307.7L27.7 313.5L22.4 309.1L16.6 311.5L18.5 306.7L15.2 301.4L21.4 301.4Z" fill="url(#gYel)" stroke="#26261c" stroke-width="1" stroke-linejoin="round"/><path d="M11.4 329.4L23.25 325.1L22.9 339L11.4 342.4Z" fill="url(#gBoxL)"/><path d="M23.25 325.1L31.8 332.3V344.6L22.9 339Z" fill="url(#gBoxR)"/><path d="M11.4 342.4L22.9 339L31.8 344.6L20.5 348.7Z" fill="url(#gBoxB)"/><path d="M12.4 330.2L22.9 326.3M12.4 330.2V341.9L20.6 347.6L30.9 344.2" fill="none" stroke="#f0f0ff" stroke-width="0.8" opacity="0.85"/><path d="M11.4 329.4L23.25 325.1L31.8 332.3V344.6L20.5 348.7L11.4 342.4Z" fill="none" stroke="#14142a" stroke-width="1.2" stroke-linejoin="round"/><path d="M30.4 380.5 L30.9 379.7 L31.4 378.8 L31.8 377.9 L32.1 377.1 L32.3 376.1 L32.5 375.2 L32.7 374.3 L32.7 373.3 L32.7 372.4 L32.6 371.5 L32.5 370.6 L32.2 369.7 L32.0 368.8 L31.6 367.9 L31.2 367.1 L30.8 366.3 L30.3 365.6 L29.7 364.9 L29.1 364.2 L28.4 363.6 L27.7 363.1 L27.0 362.6 L26.3 362.1 L25.5 361.7 L24.7 361.4 L23.8 361.2 L23.0 361.0 L22.2 360.8 L21.3 360.7 L20.5 360.7 L19.6 360.8 L18.8 360.9 L18.0 361.0 L17.2 361.3 L16.4 361.5 L15.6 361.9 L14.9 362.3 L14.2 362.7 L13.6 363.2 L13.0 363.7 L12.4 364.3 L11.9 364.9 L11.4 365.5 L11.0 366.2 L10.6 366.9 L10.3 367.6 L10.0 368.3 L9.8 369.1 L9.7 369.8 L9.6 370.6 L9.5 371.4 L9.6 372.1 L9.6 372.9 L9.8 373.6 L9.9 374.3 L10.2 375.0 L10.4 375.7 L10.8 376.4 L11.1 377.0 L11.5 377.6 L12.0 378.2 L12.5 378.7 L13.0 379.2 L13.6 379.6 L14.1 380.0 L14.8 380.3 L15.4 380.6 L16.0 380.9 L16.7 381.1 L17.3 381.3 L18.0 381.4 L18.7 381.4 L19.4 381.4 L20.0 381.4 L20.7 381.3 L21.3 381.2 L22.0 381.0 L22.6 380.8 L23.2 380.5 L23.7 380.2 L24.2 379.8 L24.8 379.5 L25.2 379.0 L25.7 378.6 L26.1 378.1 L26.4 377.6 L26.7 377.1 L27.0 376.6 L27.3 376.0 L27.5 375.4 L27.6 374.9 L27.7 374.3 L27.8 373.7 L27.8 373.1 L27.8 372.5 L27.7 371.9 L27.6 371.4 L27.5 370.8 L27.3 370.3 L27.1 369.8 L26.8 369.3 L26.6 368.8 L26.2 368.4 L25.9 368.0 L25.5 367.6 L25.1 367.2 L24.7 366.9 L24.2 366.6 L23.8 366.3 L23.3 366.1 L22.8 366.0 L22.3 365.8 L21.9 365.7 L21.4 365.6 L20.9 365.6 L20.4 365.6 L19.9 365.6 L19.4 365.7 L18.9 365.8 L18.5 366.0 L18.0 366.1 L17.6 366.4 L17.2 366.6 L16.8 366.8 L16.5 367.1 L16.1 367.4 L15.8 367.8 L15.6 368.1 L15.3 368.5 L15.1 368.9 L14.9 369.2 L14.7 369.6 L14.6 370.1 L14.5 370.5 L14.5 370.9 L14.4 371.3 L14.4 371.7 L14.4 372.1 L14.5 372.5 L14.6 372.9 L14.7 373.3 L14.8 373.6 L15.0 374.0 L15.2 374.3 L15.4 374.6 L15.6 374.9 L15.9 375.2 L16.1 375.4 L16.4 375.6 L16.7 375.8 L17.0 376.0 L17.3 376.2 L17.6 376.3 L17.9 376.4 L18.3 376.5 L18.6 376.5 L18.9 376.6 L19.2 376.6 L19.6 376.6 L19.9 376.5 L20.2 376.4 L20.5 376.4 L20.8 376.3 L21.0 376.1 L21.3 376.0 L21.5 375.8 L21.7 375.6 L21.9 375.5 L22.1 375.2 L22.3 375.0 L22.5 374.8 L22.6 374.6 L22.7 374.3 L22.8 374.1 L22.9 373.9 L22.9 373.6 L23.0 373.4 L23.0 373.1 L23.0 372.9 L23.0 372.7 L22.9 372.4 L22.9 372.2 L22.8 372.0 L22.7 371.8 L22.6 371.6 L22.5 371.4 L22.4 371.3 L22.2 371.1 L22.1 371.0 L22.0 370.9 L21.8 370.8 L21.6 370.7 L21.5 370.6 L21.3 370.5 L21.2 370.5 L21.0 370.4 L20.8 370.4 L20.7 370.4 L20.5 370.4 L20.4 370.4 L20.2 370.4 L20.1 370.5 L19.9 370.5 L19.8 370.6 L19.7 370.7 L19.6 370.7 L19.5 370.8 L19.4 370.9 L19.3 371.0 L19.2 371.1 L19.2 371.2 L19.1 371.3 L19.1 371.4 L19.1 371.5 L19.1 371.6 L19.1 371.7 L19.1 371.8 L19.1 371.9 L19.1 371.9 L19.1 372.0" fill="none" stroke="#000" stroke-width="1"/><path d="M10.4 408.5H22.8" fill="none" stroke="#111" stroke-width="1"/><path d="M10.8 408.8Q19 416 18.6 422.6Q18 427.4 14 428.4" fill="none" stroke="#111" stroke-width="1"/><path d="M13.4 428.8H20" stroke="#111" stroke-width="1"/><rect x="9.6" y="426.8" width="3.6" height="3.8" fill="#fff" stroke="#111" stroke-width="1"/><circle cx="20.6" cy="429.4" r="1.1" fill="#fff" stroke="#111" stroke-width="0.9"/><path d="M25.6 406.6Q28 406.2 29.8 407.6L33 413.4L29.4 418L22.8 415.4Z" fill="url(#gCap)" stroke="#1d3f63" stroke-width="0.8" stroke-linejoin="round"/><path d="M23.6 415L29.6 417.4L28 420.6L23.6 419Z" fill="#2b2b2b"/><ellipse cx="25.8" cy="419" rx="2.2" ry="1.4" fill="#f6c544" transform="rotate(22 25.8 419)"/><path d="M24 420.4L21.2 427.6M26.2 421.2L22.4 427.8" stroke="#222" stroke-width="1"/><path d="M25 421L21.8 427.6" stroke="#ccc" stroke-width="0.7"/><path d="M10.2 442.4H15L10.4 452H16.2Q17.6 455 16.8 458Q16.6 463.4 21.4 463.4Q27.6 462.8 30.2 458.2" fill="none" stroke="#111" stroke-width="1"/><path d="M25 440.6Q29 441.6 32.2 446.4L27.6 455.6L21 452.4Z" fill="url(#gPencil)" stroke="#1a1a1a" stroke-width="0.9" stroke-linejoin="round"/><path d="M24.6 441.4L21.6 452.6" stroke="#fffbb0" stroke-width="1.2"/><path d="M21 452.4Q24 451 27.6 455.6L20.8 461.8Z" fill="#fff" stroke="#1a1a1a" stroke-width="0.9" stroke-linejoin="round"/><path d="M24.6 454.6L27.4 455.6L22 460.6Z" fill="#f5b638"/><path d="M20.9 458.4L22.6 460L20.6 462Z" fill="#000"/><path d="M9.3 475.3Q13.6 474.6 17.5 477.2Q16.2 481 16 484.4Q15.2 489.2 16.5 494Q18 497.2 20.4 497.4Q22.8 497.6 24.7 497Q27 495.6 29 494Q30.6 493.6 32.1 495.2Q30.2 494.8 28.5 495.8Q26.6 497.6 24.7 498.4Q22 499.4 19.4 498.9Q16.4 498.4 14.6 496.5Q12.2 494 11.7 491.2Q10.8 487.6 11.2 484.4Q11.6 481 12.2 478.7Q11.4 476.4 9.3 475.3Z" fill="#000"/><path d="M24.6 475.2L33 478.4L31.4 482.6L23 479.4Z" fill="#4f86b8"/><path d="M24.6 475.2L33 478.4L32.4 479.8L24 476.6Z" fill="#9cc3e0"/><path d="M23 479.4L31.4 482.6L30.8 484.2L22.4 481Z" fill="#d01c1c"/><path d="M22.4 481L30.6 484.2Q29.6 489.6 19.8 495.2Q18.6 487 22.4 481Z" fill="#fbd23c" stroke="#111" stroke-width="1" stroke-linejoin="round"/><path d="M22.8 483.4Q20.6 488.6 20.6 493" stroke="#fff6b8" stroke-width="1.1" fill="none"/><path d="M24.4 486.2L20.4 494.2" stroke="#111" stroke-width="0.9"/><circle cx="24.6" cy="485.8" r="0.9" fill="#111"/><text x="19.3" y="529.7" text-anchor="middle" font-family="DejaVu Sans,Liberation Sans,sans-serif" font-weight="bold" font-size="25.8" fill="#111">A</text><path d="M29.6 510.2V531.4M28 510.2H31.2M28 531.4H31.2" stroke="#000" stroke-width="0.9"/><rect x="10" y="557.9" width="21.9" height="22" fill="url(#gGreenS)"/><rect x="11.2" y="559.1" width="19.6" height="19.6" fill="url(#gGreenF)"/><path d="M15 564L27 574" stroke="#222" stroke-width="1.1"/><rect x="13" y="562" width="3.5" height="3.5" fill="#fff" stroke="#222" stroke-width="1.3"/><rect x="25.3" y="572.2" width="3.5" height="3.5" fill="#fff" stroke="#222" stroke-width="1.3"/></svg>
<div class="selbtn" style="left:1021px;top:137px;width:36px;height:34px"></div>
<div class="selbtn" style="left:1021px;top:375px;width:36px;height:34px"></div>
<div class="selbtn" style="left:1021px;top:480px;width:36px;height:34px"></div>
<div class="hsep" style="left:1021px;top:178px;width:36px"></div>
<div class="hsep" style="left:1021px;top:367px;width:36px"></div>
<div class="hsep" style="left:1021px;top:592px;width:36px"></div>
<svg style="left:1036px;top:614.5px" width="7" height="12" viewBox="0 0 7 12"><path d="M0 0V11L6.2 5.5Z" fill="#2e3436"/></svg>
<svg style="left:1039px;top:652.3px" width="7" height="12" viewBox="0 0 7 12"><path d="M6.4 0V11L0.2 5.5Z" fill="#2e3436"/></svg>
<svg style="left:0;top:0" width="1062" height="640" viewBox="0 0 1062 640"><path d="M1035.6 150.6L1041 156" stroke="#000" stroke-width="1.2"/><path d="M1042.4 157.4L1038 156.6L1041.6 153Z" fill="#000"/><path d="M1033.9 146.4L1036.5 149L1033.9 151.6L1031.3000000000002 149Z" fill="#b9b9ff" stroke="#2a2aff" stroke-width="1.3"/><path d="M1043.9 156.5L1046.5 159.1L1043.9 161.7L1041.3000000000002 159.1Z" fill="#b9b9ff" stroke="#2a8a36" stroke-width="1.3"/><path d="M1035.6 199.39999999999998L1041 204.8" stroke="#000" stroke-width="1.2"/><path d="M1042.4 206.2L1038 205.39999999999998L1041.6 201.8Z" fill="#000"/><path d="M1033.9 195.20000000000002L1036.5 197.8L1033.9 200.4L1031.3000000000002 197.8Z" fill="#b9b9ff" stroke="#2a2aff" stroke-width="1.3"/><path d="M1043.9 205.29999999999998L1046.5 207.89999999999998L1043.9 210.49999999999997L1041.3000000000002 207.89999999999998Z" fill="#b9b9ff" stroke="#2a8a36" stroke-width="1.3"/><path d="M1035.6 388.6L1041 394" stroke="#000" stroke-width="1.2"/><path d="M1042.4 395.4L1038 394.6L1041.6 391Z" fill="#000"/><path d="M1033.9 384.4L1036.5 387L1033.9 389.6L1031.3000000000002 387Z" fill="#b9b9ff" stroke="#2a2aff" stroke-width="1.3"/><path d="M1043.9 394.5L1046.5 397.1L1043.9 399.70000000000005L1041.3000000000002 397.1Z" fill="#b9b9ff" stroke="#2a8a36" stroke-width="1.3"/><path d="M1031 243.1H1044M1044 243.8V229.6" fill="none" stroke="#cde3cd" stroke-width="1.4" stroke-dasharray="1.5 1.5"/><path d="M1031 278.1H1044M1044 278.8V264.6" fill="none" stroke="#dadad8" stroke-width="1.4" stroke-dasharray="1.5 1.5"/><path d="M1044 276.0L1046.1 278.1L1044 280.20000000000005L1041.9 278.1Z" fill="#dfe2f0" stroke="#b9d9bb" stroke-width="1.3"/><path d="M1031 313.1H1044M1044 313.8V299.6" fill="none" stroke="#dadad8" stroke-width="1.4" stroke-dasharray="1.5 1.5"/><path d="M1044 302.7L1045.6 304.3L1044 305.90000000000003L1042.4 304.3Z" fill="#dfe2f0" stroke="#b9d9bb" stroke-width="1.3"/><path d="M1031 348.1H1044M1044 348.8V334.6" fill="none" stroke="#dadad8" stroke-width="1.4" stroke-dasharray="1.5 1.5"/><circle cx="1035" cy="339.3" r="1.6" fill="#eef0f2" stroke="#c6dec8" stroke-width="0.9"/><path d="M1031.8 420.8Q1038.8 421.6 1041.2 426Q1042.6 430 1039.3 432.8Q1044.4 432.5 1046.1 428.2" fill="none" stroke="#168a1e" stroke-width="1.35" stroke-linecap="round"/><path d="M1031.8 469L1046.3 454.7M1031.8 464.2L1046.3 459.2" stroke="#444" stroke-width="1"/><path d="M1039 459.79999999999995L1041.1 461.9L1039 464.0L1036.9 461.9Z" fill="#8a8ae0" stroke="#1e8a28" stroke-width="1.3"/><path d="M1031.8 491.20000000000005Q1038.8 492.0 1041.2 496.4Q1042.6 500.4 1039.3 503.20000000000005Q1044.4 502.9 1046.1 498.6" fill="none" stroke="#555" stroke-width="1" stroke-linecap="round"/><path d="M1039 499.70000000000005L1041.4 502.1L1039 504.5L1036.6 502.1Z" fill="#9a9aee" stroke="#1e9a2c" stroke-width="1.3"/><path d="M1031.6 524.8Q1040 525.6 1041.4 530.8Q1042.4 535.6 1038.8 537Q1044.4 537 1046.2 531.6" fill="none" stroke="#555" stroke-width="1"/><rect x="1036.6" y="525.2" width="3.8" height="3.8" fill="#8a8ae0" stroke="#1e9a2c" stroke-width="1.2"/><path d="M1032 573.8L1046 560.4" stroke="#444" stroke-width="1"/><path d="M1033.2 573.6L1035 568.4M1035.2 574.6L1037 569.4M1041.6 565.4L1043.4 560.2M1043.6 566.4L1045.4 561.2" stroke="#d4141c" stroke-width="1.1"/><rect x="1037.2" y="565.2" width="3.6" height="3.6" fill="#8a8ae0" stroke="#1e9a2c" stroke-width="1.2"/></svg>
<div class="a" style="left:67px;top:159px;width:916px;height:455px;background:#fff"></div>
<div class="a" style="left:310px;top:159px;width:1px;height:455px;background:#666"></div>
<div class="a" style="left:740px;top:159px;width:4px;height:455px;background:#666"></div>
<svg style="left:0;top:0" width="1062" height="706" viewBox="0 0 1062 706" shape-rendering="crispEdges"><rect x="66" y="158" width="917" height="1" fill="#2e3436"/><rect x="66" y="158" width="1" height="456" fill="#2e3436"/><rect x="74" y="151" width="1" height="7" fill="#2e3436"/><rect x="84" y="151" width="1" height="7" fill="#2e3436"/><rect x="94" y="151" width="1" height="7" fill="#2e3436"/><rect x="104" y="133" width="1" height="25" fill="#2e3436"/><rect x="115" y="151" width="1" height="7" fill="#2e3436"/><rect x="125" y="151" width="1" height="7" fill="#2e3436"/><rect x="135" y="151" width="1" height="7" fill="#2e3436"/><rect x="145" y="151" width="1" height="7" fill="#2e3436"/><rect x="156" y="145" width="1" height="13" fill="#2e3436"/><rect x="166" y="151" width="1" height="7" fill="#2e3436"/><rect x="176" y="151" width="1" height="7" fill="#2e3436"/><rect x="186" y="151" width="1" height="7" fill="#2e3436"/><rect x="197" y="151" width="1" height="7" fill="#2e3436"/><rect x="207" y="133" width="1" height="25" fill="#2e3436"/><rect x="217" y="151" width="1" height="7" fill="#2e3436"/><rect x="227" y="151" width="1" height="7" fill="#2e3436"/><rect x="238" y="151" width="1" height="7" fill="#2e3436"/><rect x="248" y="151" width="1" height="7" fill="#2e3436"/><rect x="258" y="145" width="1" height="13" fill="#2e3436"/><rect x="268" y="151" width="1" height="7" fill="#2e3436"/><rect x="279" y="151" width="1" height="7" fill="#2e3436"/><rect x="289" y="151" width="1" height="7" fill="#2e3436"/><rect x="299" y="151" width="1" height="7" fill="#2e3436"/><rect x="309" y="133" width="1" height="25" fill="#2e3436"/><rect x="320" y="151" width="1" height="7" fill="#2e3436"/><rect x="330" y="151" width="1" height="7" fill="#2e3436"/><rect x="340" y="151" width="1" height="7" fill="#2e3436"/><rect x="351" y="151" width="1" height="7" fill="#2e3436"/><rect x="361" y="145" width="1" height="13" fill="#2e3436"/><rect x="371" y="151" width="1" height="7" fill="#2e3436"/><rect x="381" y="151" width="1" height="7" fill="#2e3436"/><rect x="392" y="151" width="1" height="7" fill="#2e3436"/><rect x="402" y="151" width="1" height="7" fill="#2e3436"/><rect x="412" y="133" width="1" height="25" fill="#2e3436"/><rect x="422" y="151" width="1" height="7" fill="#2e3436"/><rect x="433" y="151" width="1" height="7" fill="#2e3436"/><rect x="443" y="151" width="1" height="7" fill="#2e3436"/><rect x="453" y="151" width="1" height="7" fill="#2e3436"/><rect x="463" y="145" width="1" height="13" fill="#2e3436"/><rect x="474" y="151" width="1" height="7" fill="#2e3436"/><rect x="484" y="151" width="1" height="7" fill="#2e3436"/><rect x="494" y="151" width="1" height="7" fill="#2e3436"/><rect x="504" y="151" width="1" height="7" fill="#2e3436"/><rect x="515" y="133" width="1" height="25" fill="#2e3436"/><rect x="525" y="151" width="1" height="7" fill="#2e3436"/><rect x="535" y="151" width="1" height="7" fill="#2e3436"/><rect x="545" y="151" width="1" height="7" fill="#2e3436"/><rect x="556" y="151" width="1" height="7" fill="#2e3436"/><rect x="566" y="145" width="1" height="13" fill="#2e3436"/><rect x="576" y="151" width="1" height="7" fill="#2e3436"/><rect x="586" y="151" width="1" height="7" fill="#2e3436"/><rect x="597" y="151" width="1" height="7" fill="#2e3436"/><rect x="607" y="151" width="1" height="7" fill="#2e3436"/><rect x="617" y="133" width="1" height="25" fill="#2e3436"/><rect x="627" y="151" width="1" height="7" fill="#2e3436"/><rect x="638" y="151" width="1" height="7" fill="#2e3436"/><rect x="648" y="151" width="1" height="7" fill="#2e3436"/><rect x="658" y="151" width="1" height="7" fill="#2e3436"/><rect x="668" y="145" width="1" height="13" fill="#2e3436"/><rect x="679" y="151" width="1" height="7" fill="#2e3436"/><rect x="689" y="151" width="1" height="7" fill="#2e3436"/><rect x="699" y="151" width="1" height="7" fill="#2e3436"/><rect x="709" y="151" width="1" height="7" fill="#2e3436"/><rect x="720" y="133" width="1" height="25" fill="#2e3436"/><rect x="730" y="151" width="1" height="7" fill="#2e3436"/><rect x="740" y="151" width="1" height="7" fill="#2e3436"/><rect x="750" y="151" width="1" height="7" fill="#2e3436"/><rect x="761" y="151" width="1" height="7" fill="#2e3436"/><rect x="771" y="145" width="1" height="13" fill="#2e3436"/><rect x="781" y="151" width="1" height="7" fill="#2e3436"/><rect x="791" y="151" width="1" height="7" fill="#2e3436"/><rect x="802" y="151" width="1" height="7" fill="#2e3436"/><rect x="812" y="151" width="1" height="7" fill="#2e3436"/><rect x="822" y="133" width="1" height="25" fill="#2e3436"/><rect x="832" y="151" width="1" height="7" fill="#2e3436"/><rect x="843" y="151" width="1" height="7" fill="#2e3436"/><rect x="853" y="151" width="1" height="7" fill="#2e3436"/><rect x="863" y="151" width="1" height="7" fill="#2e3436"/><rect x="873" y="145" width="1" height="13" fill="#2e3436"/><rect x="884" y="151" width="1" height="7" fill="#2e3436"/><rect x="894" y="151" width="1" height="7" fill="#2e3436"/><rect x="904" y="151" width="1" height="7" fill="#2e3436"/><rect x="914" y="151" width="1" height="7" fill="#2e3436"/><rect x="925" y="133" width="1" height="25" fill="#2e3436"/><rect x="935" y="151" width="1" height="7" fill="#2e3436"/><rect x="945" y="151" width="1" height="7" fill="#2e3436"/><rect x="955" y="151" width="1" height="7" fill="#2e3436"/><rect x="966" y="151" width="1" height="7" fill="#2e3436"/><rect x="976" y="145" width="1" height="13" fill="#2e3436"/><rect x="61" y="164" width="5" height="1" fill="#2e3436"/><rect x="61" y="174" width="5" height="1" fill="#2e3436"/><rect x="49" y="184" width="17" height="1" fill="#2e3436"/><rect x="61" y="194" width="5" height="1" fill="#2e3436"/><rect x="61" y="205" width="5" height="1" fill="#2e3436"/><rect x="61" y="215" width="5" height="1" fill="#2e3436"/><rect x="61" y="225" width="5" height="1" fill="#2e3436"/><rect x="57" y="235" width="9" height="1" fill="#2e3436"/><rect x="61" y="246" width="5" height="1" fill="#2e3436"/><rect x="61" y="256" width="5" height="1" fill="#2e3436"/><rect x="61" y="266" width="5" height="1" fill="#2e3436"/><rect x="61" y="276" width="5" height="1" fill="#2e3436"/><rect x="49" y="287" width="17" height="1" fill="#2e3436"/><rect x="61" y="297" width="5" height="1" fill="#2e3436"/><rect x="61" y="307" width="5" height="1" fill="#2e3436"/><rect x="61" y="317" width="5" height="1" fill="#2e3436"/><rect x="61" y="328" width="5" height="1" fill="#2e3436"/><rect x="57" y="338" width="9" height="1" fill="#2e3436"/><rect x="61" y="348" width="5" height="1" fill="#2e3436"/><rect x="61" y="358" width="5" height="1" fill="#2e3436"/><rect x="61" y="369" width="5" height="1" fill="#2e3436"/><rect x="61" y="379" width="5" height="1" fill="#2e3436"/><rect x="49" y="389" width="17" height="1" fill="#2e3436"/><rect x="61" y="399" width="5" height="1" fill="#2e3436"/><rect x="61" y="410" width="5" height="1" fill="#2e3436"/><rect x="61" y="420" width="5" height="1" fill="#2e3436"/><rect x="61" y="430" width="5" height="1" fill="#2e3436"/><rect x="57" y="440" width="9" height="1" fill="#2e3436"/><rect x="61" y="451" width="5" height="1" fill="#2e3436"/><rect x="61" y="461" width="5" height="1" fill="#2e3436"/><rect x="61" y="471" width="5" height="1" fill="#2e3436"/><rect x="61" y="481" width="5" height="1" fill="#2e3436"/><rect x="49" y="492" width="17" height="1" fill="#2e3436"/><rect x="61" y="502" width="5" height="1" fill="#2e3436"/><rect x="61" y="512" width="5" height="1" fill="#2e3436"/><rect x="61" y="522" width="5" height="1" fill="#2e3436"/><rect x="61" y="533" width="5" height="1" fill="#2e3436"/><rect x="57" y="543" width="9" height="1" fill="#2e3436"/><rect x="61" y="553" width="5" height="1" fill="#2e3436"/><rect x="61" y="563" width="5" height="1" fill="#2e3436"/><rect x="61" y="574" width="5" height="1" fill="#2e3436"/><rect x="61" y="584" width="5" height="1" fill="#2e3436"/><rect x="49" y="594" width="17" height="1" fill="#2e3436"/><rect x="61" y="604" width="5" height="1" fill="#2e3436"/></svg><svg style="left:0;top:0" width="1062" height="706" viewBox="0 0 1062 706"><path d="M181.6 154H191.4L186.5 158.4Z" fill="#2e3436"/><path d="M62 230.6V240.4L66.4 235.5Z" fill="#2e3436"/></svg>
<div class="t" style="left:106.4px;top:134.5px;font-size:9.2px;line-height:12px">-100</div>
<div class="t" style="left:209.4px;top:134.5px;font-size:9.2px;line-height:12px">-50</div>
<div class="t" style="left:311.4px;top:134.5px;font-size:9.2px;line-height:12px">0</div>
<div class="t" style="left:414.4px;top:134.5px;font-size:9.2px;line-height:12px">50</div>
<div class="t" style="left:516.4px;top:134.5px;font-size:9.2px;line-height:12px">100</div>
<div class="t" style="left:619.4px;top:134.5px;font-size:9.2px;line-height:12px">150</div>
<div class="t" style="left:722.4px;top:134.5px;font-size:9.2px;line-height:12px">200</div>
<div class="t" style="left:824.4px;top:134.5px;font-size:9.2px;line-height:12px">250</div>
<div class="t" style="left:927.4px;top:134.5px;font-size:9.2px;line-height:12px">300</div>
<div class="t" style="left:54px;top:185.9px;width:6px;white-space:normal;word-break:break-all;font-size:9px;line-height:10px">50</div>
<div class="t" style="left:54px;top:288.9px;width:6px;white-space:normal;word-break:break-all;font-size:9px;line-height:10px">100</div>
<div class="t" style="left:54px;top:390.9px;width:6px;white-space:normal;word-break:break-all;font-size:9px;line-height:10px">150</div>
<div class="t" style="left:54px;top:493.9px;width:6px;white-space:normal;word-break:break-all;font-size:9px;line-height:10px">200</div>
<div class="t" style="left:54px;top:595.9px;width:6px;white-space:normal;word-break:break-all;font-size:9px;line-height:10px">25</div>
<div class="a" style="left:49.5px;top:133.3px;width:17.4px;height:25.2px;box-sizing:border-box;border:1px solid #d3cbc4;border-radius:4.5px;background:#fcfbfa"></div>
<svg style="left:0;top:0" width="70" height="162" viewBox="0 0 70 162"><rect x="51.5" y="135.6" width="13.2" height="20.8" fill="none" stroke="#858784" stroke-width="0.7" stroke-dasharray="2.2 1.1" stroke-dashoffset="-1"/><path d="M53.8 144.6V142.6Q53.8 138.8 58 138.8Q62.2 138.8 62.2 142.6V144.6" fill="none" stroke="#000" stroke-width="1.2"/><rect x="51.9" y="144.7" width="12.4" height="7.6" fill="url(#gLockO)" stroke="#1a1a1a" stroke-width="1"/><circle cx="58" cy="147.4" r="1.1" fill="#000"/><rect x="57.3" y="147.6" width="1.4" height="2.8" fill="#000"/></svg>
<div class="a" style="left:983.2px;top:133.3px;width:17.7px;height:25.2px;box-sizing:border-box;border:1px solid #d3cbc4;border-radius:4.5px;background:#fcfbfa"></div>
<svg style="left:0;top:0" width="1010" height="162" viewBox="0 0 1010 162"><rect x="984.6" y="138.6" width="14.8" height="15" rx="3" fill="url(#gKey)" stroke="#7d7f7c" stroke-width="0.9"/><path d="M986.2 153.2Q992 154.4 997.8 153.2" stroke="#3c3e3c" stroke-width="1" fill="none"/><path d="M993.7 142.1H991.5L989.1 143.7V145.6L991.3 144.7V149.7H993.7Z" fill="#fff" stroke="#777976" stroke-width="0.9" stroke-linejoin="round"/></svg>
<div class="a" style="left:983px;top:159px;width:18px;height:455px;background:#cdcdcd"></div>
<div class="a" style="left:988px;top:329px;width:8px;height:115px;background:#7e8283;border-radius:4px"></div>
<div class="a" style="left:67px;top:614px;width:916px;height:26px;background:#cdcdcd"></div>
<div class="a" style="left:232px;top:623px;width:584px;height:8px;background:#7e8283;border-radius:4px"></div>
<div class="a" style="left:983.5px;top:614.5px;width:17px;height:25px;box-sizing:border-box;border:1px solid #d5cec8;border-radius:4.5px;background:#f4f3f1"></div>
<svg style="left:0;top:0" width="1010" height="642" viewBox="0 0 1010 642"><defs><clipPath id="triC"><path d="M986.9 619Q988.3 618.4 990.2 620.2L999.1 629.6L989 634.9Q988 635 987.6 633.6Q985.3 626 986.9 619Z"/></clipPath><radialGradient id="rG" cx="988" cy="620" r="12" gradientUnits="userSpaceOnUse"><stop offset="0" stop-color="#00e000"/><stop offset="0.5" stop-color="#00ff00"/><stop offset="1" stop-color="#00ff00" stop-opacity="0"/></radialGradient><radialGradient id="rR" cx="999" cy="629.5" r="8" gradientUnits="userSpaceOnUse"><stop offset="0" stop-color="#ff0000"/><stop offset="0.45" stop-color="#ff1000"/><stop offset="1" stop-color="#ff0000" stop-opacity="0"/></radialGradient><radialGradient id="rB" cx="988.6" cy="635" r="8" gradientUnits="userSpaceOnUse"><stop offset="0" stop-color="#0000ff"/><stop offset="0.45" stop-color="#1000ff"/><stop offset="1" stop-color="#0000ff" stop-opacity="0"/></radialGradient><radialGradient id="rW" cx="991.6" cy="629" r="2.6" gradientUnits="userSpaceOnUse"><stop offset="0" stop-color="#ffffff"/><stop offset="1" stop-color="#ffffff" stop-opacity="0"/></radialGradient><radialGradient id="rC" cx="987.4" cy="628" r="5.5" gradientUnits="userSpaceOnUse"><stop offset="0" stop-color="#00ffff"/><stop offset="1" stop-color="#00ffff" stop-opacity="0"/></radialGradient><radialGradient id="rM" cx="993" cy="632.4" r="4.2" gradientUnits="userSpaceOnUse"><stop offset="0" stop-color="#ff00ff"/><stop offset="1" stop-color="#ff00ff" stop-opacity="0"/></radialGradient><radialGradient id="rY" cx="995.2" cy="625.6" r="3.6" gradientUnits="userSpaceOnUse"><stop offset="0" stop-color="#ffff00"/><stop offset="1" stop-color="#ffff00" stop-opacity="0"/></radialGradient></defs><g clip-path="url(#triC)"><rect x="984" y="616" width="17" height="22" fill="#9f9"/><rect x="984" y="616" width="17" height="22" fill="url(#rG)"/><rect x="984" y="616" width="17" height="22" fill="url(#rC)"/><rect x="984" y="616" width="17" height="22" fill="url(#rB)"/><rect x="984" y="616" width="17" height="22" fill="url(#rM)"/><rect x="984" y="616" width="17" height="22" fill="url(#rR)"/><rect x="984" y="616" width="17" height="22" fill="url(#rY)"/><rect x="984" y="616" width="17" height="22" fill="url(#rW)"/></g><path d="M986.9 619Q988.3 618.4 990.2 620.2L999.1 629.6L989 634.9Q988 635 987.6 633.6Q985.3 626 986.9 619Z" fill="none" stroke="#222" stroke-width="0.7" opacity="0.8"/></svg>
<div class="a" style="left:0;top:641px;width:1024px;height:34px;background:#cdcdcd"></div>
<div class="a" style="left:0;top:641px;width:1023px;height:19px;display:flex">
<div style="width:16px;height:19px;background:#fff;position:relative"><svg style="left:0;top:0" width="16" height="19" viewBox="0 0 16 19"><path d="M0 0L16 19M16 0L0 19" stroke="#7a0a0a" stroke-width="1.6"/></svg></div>
<div style="width:19px;height:19px;background:#000000"></div>
<div style="width:19px;height:19px;background:#1a1a1a"></div>
<div style="width:19px;height:19px;background:#333333"></div>
<div style="width:19px;height:19px;background:#4d4d4d"></div>
<div style="width:19px;height:19px;background:#666666"></div>
<div style="width:19px;height:19px;background:#808080"></div>
<div style="width:19px;height:19px;background:#999999"></div>
<div style="width:19px;height:19px;background:#b3b3b3"></div>
<div style="width:19px;height:19px;background:#cccccc"></div>
<div style="width:19px;height:19px;background:#e6e6e6"></div>
<div style="width:19px;height:19px;background:#ececec"></div>
<div style="width:19px;height:19px;background:#f2f2f2"></div>
<div style="width:19px;height:19px;background:#f9f9f9"></div>
<div style="width:19px;height:19px;background:#ffffff"></div>
<div style="width:19px;height:19px;background:#800000"></div>
<div style="width:19px;height:19px;background:#ff0000"></div>
<div style="width:19px;height:19px;background:#808000"></div>
<div style="width:19px;height:19px;background:#ffff00"></div>
<div style="width:19px;height:19px;background:#008000"></div>
<div style="width:19px;height:19px;background:#00ff00"></div>
<div style="width:19px;height:19px;background:#008080"></div>
<div style="width:19px;height:19px;background:#00ffff"></div>
<div style="width:19px;height:19px;background:#000080"></div>
<div style="width:19px;height:19px;background:#0000ff"></div>
<div style="width:19px;height:19px;background:#800080"></div>
<div style="width:19px;height:19px;background:#ff00ff"></div>
<div style="width:19px;height:19px;background:#2b0000"></div>
<div style="width:19px;height:19px;background:#550000"></div>
<div style="width:19px;height:19px;background:#800000"></div>
<div style="width:19px;height:19px;background:#aa0000"></div>
<div style="width:19px;height:19px;background:#d40000"></div>
<div style="width:19px;height:19px;background:#ff0000"></div>
<div style="width:19px;height:19px;background:#ff2a2a"></div>
<div style="width:19px;height:19px;background:#ff5555"></div>
<div style="width:19px;height:19px;background:#ff8080"></div>
<div style="width:19px;height:19px;background:#ffaaaa"></div>
<div style="width:19px;height:19px;background:#ffd5d5"></div>
<div style="width:19px;height:19px;background:#280b0b"></div>
<div style="width:19px;height:19px;background:#501616"></div>
<div style="width:19px;height:19px;background:#782121"></div>
<div style="width:19px;height:19px;background:#a02c2c"></div>
<div style="width:19px;height:19px;background:#c83737"></div>
<div style="width:19px;height:19px;background:#d35f5f"></div>
<div style="width:19px;height:19px;background:#de8787"></div>
<div style="width:19px;height:19px;background:#e9afaf"></div>
<div style="width:19px;height:19px;background:#f4d7d7"></div>
<div style="width:19px;height:19px;background:#241c1c"></div>
<div style="width:19px;height:19px;background:#483737"></div>
<div style="width:19px;height:19px;background:#6c5353"></div>
<div style="width:19px;height:19px;background:#916f6f"></div>
<div style="width:19px;height:19px;background:#ac9393"></div>
<div style="width:19px;height:19px;background:#c8b7b7"></div>
<div style="width:19px;height:19px;background:#e3dbdb"></div>
</div>
<div class="a" style="left:1023px;top:641px;width:1px;height:19px;background:#2a1208"></div>
<div class="a" style="left:0px;top:664px;width:122px;height:8px;background:#7e8283;border-radius:4px"></div>
<div class="a" style="left:0;top:675px;width:1062px;height:31px;background:#f6f5f4"></div>
<div class="t" style="left:-1px;top:677px;font-size:12px">填充:</div>
<div class="t" style="left:-1px;top:694px;font-size:12px">描边:</div>
<div class="t" style="left:54px;top:677px">N/A</div>
<div class="t" style="left:54px;top:694px">N/A</div>
<div class="t" style="left:135px;top:684px">O:</div>
<div class="spin dis" style="left:150px;top:676px;width:68px;height:34px"><i style="left:32px"></i><i style="left:49px"></i><span class="t" style="left:2px;top:8px;font-size:13px;color:#a9acad;letter-spacing:-0.5px">100</span><b class="pm" style="left:36.0px;top:15.0px;width:10px;height:2px"></b><b class="pm" style="left:53.0px;top:15.0px;width:10px;height:2px"></b><b class="pm" style="left:57.0px;top:11.0px;width:2px;height:10px"></b></div>
<div class="sep" style="left:246px;top:676px;height:30px"></div>
<svg style="left:0;top:0" width="330" height="706" viewBox="0 0 330 706"><path d="M258.2 693.6Q266 686.4 273.9 693.6Q266 700.8 258.2 693.6Z" fill="#fff" stroke="#000" stroke-width="1.2" stroke-linejoin="round"/><circle cx="266" cy="693.3" r="3" fill="#000"/><circle cx="265" cy="692.2" r="0.8" fill="#fff"/><path d="M260.2 691.4L258.2 688.9M262.9 689.8L261.7 686.2M266.2 689.2V685.2M269.6 689.8L271 686.2M272.2 691.4L273.8 689" stroke="#000" stroke-width="1.1" fill="none"/></svg><svg style="left:294px;top:684.2px" width="18" height="18" viewBox="0 0 18 18" ><path d="M12.2 6.6Q11.8 1.2 8.4 1.2Q5.6 1.2 4.4 2.4" fill="none" stroke="#fff" stroke-width="2.6" opacity="0.9"/><path d="M12.2 6.6Q11.8 1.2 8.4 1.2Q5.6 1.2 4.4 2.4" fill="none" stroke="#000" stroke-width="1.1" stroke-linecap="round"/><path d="M2.1 8.3L12.8 6.5L14.6 14.6L3.7 16.6Z" fill="url(#gLock)" stroke="#000" stroke-width="1.2" stroke-linejoin="round"/><circle cx="8.2" cy="10.6" r="1.1" fill="#000"/><path d="M7.8 10.8L7.9 13.2L9.2 13L8.7 10.7Z" fill="#000"/></svg>
<div class="a" style="left:320px;top:676px;width:75px;height:34px;box-sizing:border-box;border:1px solid #cdc7c2;border-radius:5px;background:#f5f4f2"></div>
<div class="t" style="left:333.5px;top:686.4px;font-size:10px;font-weight:bold;letter-spacing:0.2px">•图层 1</div>
<svg style="left:370.5px;top:689.8px" width="13" height="7" viewBox="0 0 13 7"><path d="M0 0H12.6L6.3 6.2Z" fill="#2e3436"/></svg>
<div class="t" style="left:396px;top:677px;letter-spacing:0.09px">No objects selected. Click, Shift+click, Alt+scroll</div>
<div class="t" style="left:396px;top:693px;letter-spacing:0.22px">mouse on top of objects, or drag around object...</div>
<div class="sep" style="left:688px;top:676px;height:30px"></div>
<div class="t" style="left:698px;top:677px">X:</div>
<div class="t" style="left:698px;top:693px">Y:</div>
<div class="t" style="left:700px;width:62px;text-align:right;top:677px;letter-spacing:-0.3px">-205.32</div>
<div class="t" style="left:700px;width:62px;text-align:right;top:693px;letter-spacing:-0.3px">46.33</div>
<div class="t" style="left:772px;top:685px;font-size:12px">缩放:</div>
<div class="spin" style="left:809px;top:676px;width:94px;height:34px"><i style="left:48px"></i><i style="left:69px"></i><span class="t" style="left:13px;top:8px;font-size:13px;color:#000;letter-spacing:-0.5px">54%</span><b class="pm" style="left:54.0px;top:15.0px;width:10px;height:2px"></b><b class="pm" style="left:75.0px;top:15.0px;width:10px;height:2px"></b><b class="pm" style="left:79.0px;top:11.0px;width:2px;height:10px"></b></div>
<div class="t" style="left:913px;top:685px;font-size:12px">旋转:</div>
<div class="spin" style="left:950px;top:676px;width:101px;height:34px"><i style="left:55px"></i><i style="left:76px"></i><span class="t" style="left:16px;top:8px;font-size:13px;color:#000;letter-spacing:-0.5px">0.00°</span><b class="pm" style="left:61.0px;top:15.0px;width:10px;height:2px"></b><b class="pm" style="left:82.0px;top:15.0px;width:10px;height:2px"></b><b class="pm" style="left:86.0px;top:11.0px;width:2px;height:10px"></b></div>
<div class="a" style="left:1060px;top:0;width:1px;height:706px;background:#fff"></div>
<div class="a" style="left:1061px;top:0;width:1px;height:706px;background:#5e5e5e"></div>
</body></html>
